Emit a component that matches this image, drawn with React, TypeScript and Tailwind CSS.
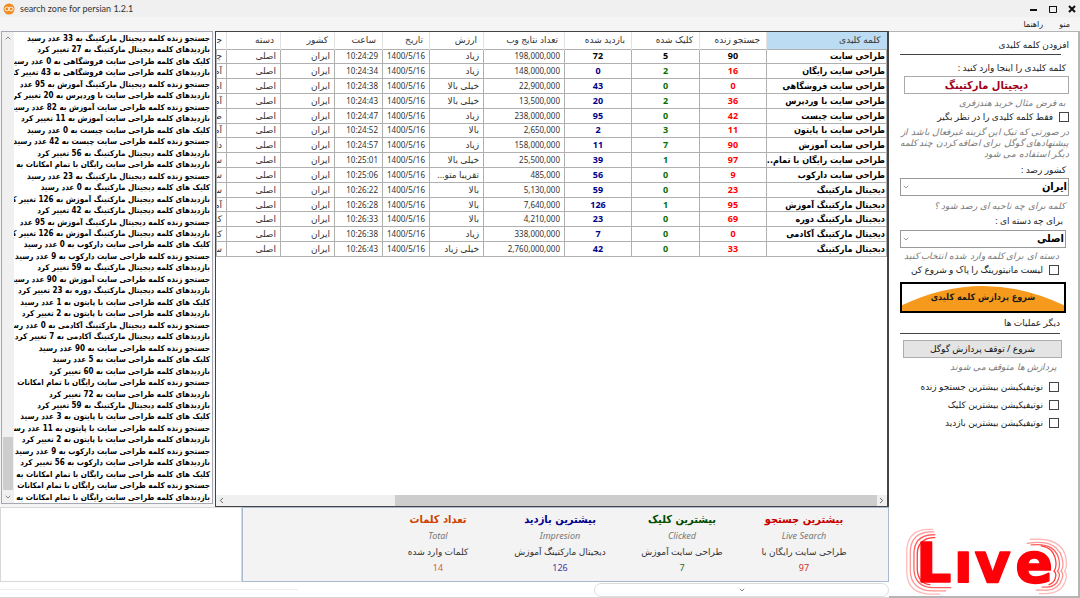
import { ReactNode, useState } from "react";
import { ChevronDown, ChevronLeft, ChevronRight, ChevronUp } from "lucide-react";

interface IRow {
  keyword: string;
  live: string;
  clicked: string;
  visited: string;
  results: string;
  value: string;
  date: string;
  time: string;
  country: string;
  category: string;
  search: string;
}

const makeRow = (
  keyword: string,
  live: string,
  clicked: string,
  visited: string,
  results: string,
  value: string,
  time: string,
  search: string
): IRow => ({
  keyword,
  live,
  clicked,
  visited,
  results,
  value,
  time,
  search,
  date: "1400/5/16",
  country: "ایران",
  category: "اصلی",
});

const rows: IRow[] = [
  makeRow("طراحی سایت", "90", "5", "72", "198,000,000", "زیاد", "10:24:29", "چیست"),
  makeRow("طراحی سایت رایگان", "16", "2", "0", "148,000,000", "زیاد", "10:24:34", "آموزش"),
  makeRow("طراحی سایت فروشگاهی", "0", "0", "43", "22,900,000", "خیلی بالا", "10:24:38", "امکانات"),
  makeRow("طراحی سایت با وردپرس", "36", "2", "20", "13,500,000", "خیلی بالا", "10:24:43", "آموزش"),
  makeRow("طراحی سایت چیست", "42", "0", "95", "238,000,000", "زیاد", "10:24:47", "طراحی"),
  makeRow("طراحی سایت با پایتون", "11", "3", "2", "2,650,000", "بالا", "10:24:52", "آموزش"),
  makeRow("طراحی سایت آموزش", "90", "7", "11", "158,000,000", "زیاد", "10:24:57", "دارکوب"),
  makeRow("طراحی سایت رایگان با تمام...", "97", "1", "39", "25,500,000", "خیلی بالا", "10:25:01", "سایت"),
  makeRow("طراحی سایت دارکوب", "9", "0", "56", "485,000", "تقریبا متو...", "10:25:06", "سایت"),
  makeRow("دیجیتال مارکتینگ", "23", "0", "59", "5,130,000", "بالا", "10:26:22", "سایت"),
  makeRow("دیجیتال مارکتینگ آموزش", "95", "1", "126", "7,640,000", "بالا", "10:26:28", "آموزش"),
  makeRow("دیجیتال مارکتینگ دوره", "69", "0", "23", "4,210,000", "بالا", "10:26:33", "کتاب"),
  makeRow("دیجیتال مارکتینگ آکادمی", "0", "0", "7", "338,000,000", "زیاد", "10:26:38", "کتاب"),
  makeRow("دیجیتال مارکتینگ", "33", "0", "42", "2,760,000,000", "خیلی زیاد", "10:26:43", "سایت"),
];

const logs: string[] = [
  "جستجو زنده کلمه دیجیتال مارکتینگ به 33 عدد رسید",
  "بازدیدهای کلمه دیجیتال مارکتینگ به 27 تغییر کرد",
  "کلیک های کلمه طراحی سایت فروشگاهی به 0 عدد رسید",
  "بازدیدهای کلمه طراحی سایت فروشگاهی به 43 تغییر کرد",
  "جستجو زنده کلمه دیجیتال مارکتینگ آموزش به 95 عدد",
  "بازدیدهای کلمه طراحی سایت با وردپرس به 20 تغییر کرد",
  "جستجو زنده کلمه طراحی سایت آموزش به 82 عدد رسید",
  "بازدیدهای کلمه طراحی سایت آموزش به 11 تغییر کرد",
  "کلیک های کلمه طراحی سایت چیست به 0 عدد رسید",
  "جستجو زنده کلمه طراحی سایت چیست به 42 عدد رسید",
  "بازدیدهای کلمه دیجیتال مارکتینگ به 56 تغییر کرد",
  "بازدیدهای کلمه طراحی سایت رایگان با تمام امکانات به",
  "جستجو زنده کلمه دیجیتال مارکتینگ به 23 عدد رسید",
  "کلیک های کلمه دیجیتال مارکتینگ به 0 عدد رسید",
  "بازدیدهای کلمه دیجیتال مارکتینگ آموزش به 126 تغییر کرد",
  "بازدیدهای کلمه دیجیتال مارکتینگ به 42 تغییر کرد",
  "جستجو زنده کلمه دیجیتال مارکتینگ آموزش به 95 عدد",
  "بازدیدهای کلمه دیجیتال مارکتینگ آموزش به 126 تغییر کرد",
  "کلیک های کلمه طراحی سایت دارکوب به 0 عدد رسید",
  "جستجو زنده کلمه طراحی سایت دارکوب به 9 عدد رسید",
  "بازدیدهای کلمه دیجیتال مارکتینگ به 59 تغییر کرد",
  "جستجو زنده کلمه طراحی سایت آموزش به 90 عدد رسید",
  "بازدیدهای کلمه دیجیتال مارکتینگ دوره به 23 تغییر کرد",
  "کلیک های کلمه طراحی سایت با پایتون به 1 عدد رسید",
  "بازدیدهای کلمه طراحی سایت با پایتون به 2 تغییر کرد",
  "جستجو زنده کلمه دیجیتال مارکتینگ آکادمی به 0 عدد رسید",
  "بازدیدهای کلمه دیجیتال مارکتینگ آکادمی به 7 تغییر کرد",
  "جستجو زنده کلمه طراحی سایت به 90 عدد رسید",
  "کلیک های کلمه طراحی سایت به 5 عدد رسید",
  "بازدیدهای کلمه طراحی سایت به 60 تغییر کرد",
  "جستجو زنده کلمه طراحی سایت رایگان با تمام امکانات",
  "بازدیدهای کلمه طراحی سایت به 72 تغییر کرد",
  "بازدیدهای کلمه دیجیتال مارکتینگ به 59 تغییر کرد",
  "کلیک های کلمه طراحی سایت با پایتون به 3 عدد رسید",
  "جستجو زنده کلمه طراحی سایت با پایتون به 11 عدد رسید",
  "بازدیدهای کلمه طراحی سایت با پایتون به 2 تغییر کرد",
  "جستجو زنده کلمه طراحی سایت دارکوب به 9 عدد رسید",
  "بازدیدهای کلمه طراحی سایت دارکوب به 56 تغییر کرد",
  "کلیک های کلمه طراحی سایت رایگان با تمام امکانات به",
  "جستجو زنده کلمه طراحی سایت رایگان با تمام امکانات",
  "بازدیدهای کلمه طراحی سایت رایگان با تمام امکانات به",
];

const stats = [
  { title: "بیشترین جستجو", sub: "Live Search", name: "طراحی سایت رایگان با", count: "97", titleColor: "text-[#c80000]", countColor: "text-[#d03030]" },
  { title: "بیشترین کلیک", sub: "Clicked", name: "طراحی سایت آموزش", count: "7", titleColor: "text-[#004b00]", countColor: "text-[#2f6b2f]" },
  { title: "بیشترین بازدید", sub: "Impresion", name: "دیجیتال مارکتینگ آموزش", count: "126", titleColor: "text-[#00008b]", countColor: "text-[#3a3aa5]" },
  { title: "تعداد کلمات", sub: "Total", name: "کلمات وارد شده", count: "14", titleColor: "text-[#cc4400]", countColor: "text-[#d9622b]" },
];

const AppIcon = () => (
  <svg width="12" height="12" viewBox="0 0 12 12" aria-hidden="true">
    <circle cx="6" cy="6" r="5.5" fill="#f08a1d" />
    <rect x="2" y="4.2" width="4" height="3.6" rx="1.6" fill="none" stroke="#fff" strokeWidth="1" />
    <rect x="6" y="4.2" width="4" height="3.6" rx="1.6" fill="none" stroke="#fff" strokeWidth="1" />
  </svg>
);

const LiveLogo = () => (
  <svg viewBox="0 0 164 68" className="w-full" role="img" aria-label="Live" direction="ltr">
    <g fill="none" strokeWidth="1.3" strokeLinecap="round">
      <g stroke="#ffb9b9">
        <path d="M27 1.3H22Q.8 2 .8 24V44Q1 66.5 26 66.5H34" />
        <path d="M125 11.3H134Q161 12 161.5 36Q161.5 41 159.5 43.5Q162 46 161 51Q158 65 142 66H134" />
      </g>
      <g stroke="#ff9494">
        <path d="M28 4H24Q4.3 5 4.3 25V43Q5 63 27 63.3H40" />
        <path d="M122 15.5Q156 10 158 36Q158 41 156 43.5Q159 46 157 51Q154 62 142 62.5H131" />
      </g>
      <g stroke="#ff6060">
        <path d="M29 6.8H26Q8 8 8 26V42Q9 59.8 28 60H45" />
        <path d="M126 17Q153 14 154.5 36Q154.5 41 152.5 43.5Q155.5 46 153.5 51Q151 59 142 59.5H137" />
      </g>
      <g stroke="#ff3a3a">
        <path d="M29 9.7H27Q11.3 11 11.3 27V41Q12 56 24 57" />
        <path d="M136 18Q150 20 151 36Q151 41 149 43.5Q152 46 150 51Q149 55 144 57" />
      </g>
    </g>
    <text
      x="10 48 69 110"
      y="54"
      fill="#fd0008"
      stroke="#fd0008"
      strokeWidth="1.5"
      strokeLinejoin="round"
      fontFamily="DejaVu Sans, sans-serif"
      fontWeight="700"
      fontSize="56"
    >
      Lıve
    </text>
  </svg>
);

const condensed = "font-['DejaVu_Sans_Condensed','DejaVu_Sans',sans-serif]";

const Hint = ({ children }: { children: ReactNode }) => (
  <p className="text-[9px] leading-[11px] whitespace-nowrap italic text-[#777]">{children}</p>
);

const CheckField = ({ label }: { label: string }) => (
  <label className="flex h-[18px] items-center gap-[6px] text-[9px] text-[#222]">
    <input
      type="checkbox"
      className="size-[10px] shrink-0 appearance-none border border-[#444] bg-white checked:bg-[#444]"
    />
    {label}
  </label>
);

const SelectField = ({ id, options }: { id: string; options: string[] }) => (
  <div className="relative">
    <select
      id={id}
      className={`${condensed} block h-[18px] w-full appearance-none border border-[#999] bg-white px-px text-[11px] leading-[16px] font-bold text-black`}
    >
      {options.map((option) => (
        <option key={option}>{option}</option>
      ))}
    </select>
    <ChevronDown className="pointer-events-none absolute top-[5px] left-[2px]" size={8} color="#666" />
  </div>
);

const LogPanel = () => (
  <section className="flex w-[212px] shrink-0 border border-[#a5a8b0] bg-white" dir="ltr">
    <div className="flex w-[12px] shrink-0 flex-col items-center justify-between bg-[#f0f0f0] py-[2px]">
      <ChevronUp size={8} color="#555" />
      <div className="flex w-full flex-col items-center gap-[3px]">
        <div className="h-[53px] w-[10px] bg-[#cdcdcd]" />
        <ChevronDown size={8} color="#555" />
      </div>
    </div>
    <ul
      dir="rtl"
      className={`${condensed} flex min-w-0 flex-1 flex-col overflow-hidden pt-px pr-[2px] text-[8px] font-bold whitespace-nowrap text-black`}
    >
      {logs.map((log, index) => (
        <li key={index} className="flex-1 leading-[11px]">
          {log}
        </li>
      ))}
    </ul>
  </section>
);

const headClass = "border-l border-[#e2e2e2] pr-[6px] text-right font-normal whitespace-nowrap";
const cellClass = "border border-[#b0b0b0] text-right whitespace-nowrap overflow-hidden";
const countClass = "border border-[#b0b0b0] text-center font-bold text-[9px]";

const ResultTable = () => (
  <section className="flex min-w-0 flex-1 flex-col border border-r-2 border-[#444] bg-white">
    <div className="flex-1 overflow-hidden">
      <table dir="rtl" className="h-[225px] w-full table-fixed border-collapse text-[9px] leading-[12px] text-[#333]">
        <colgroup>
          <col />
          <col className="w-[67px]" />
          <col className="w-[68px]" />
          <col className="w-[67px]" />
          <col className="w-[81px]" />
          <col className="w-[54px]" />
          <col className="w-[47px]" />
          <col className="w-[48px]" />
          <col className="w-[54px]" />
          <col className="w-[54px]" />
          <col className="w-[10px]" />
        </colgroup>
        <thead>
          <tr className="h-[17px]">
            <th className={`${headClass} bg-[#bbdcf2]`}>کلمه کلیدی</th>
            <th className={headClass}>جستجو زنده</th>
            <th className={headClass}>کلیک شده</th>
            <th className={headClass}>بازدید شده</th>
            <th className={headClass}>تعداد نتایج وب</th>
            <th className={headClass}>ارزش</th>
            <th className={headClass}>تاریخ</th>
            <th className={headClass}>ساعت</th>
            <th className={headClass}>کشور</th>
            <th className={headClass}>دسته</th>
            <th className="overflow-hidden pr-[4px] text-right font-normal">جستجو</th>
          </tr>
        </thead>
        <tbody>
          {rows.map((row, index) => (
            <tr key={row.time}>
              <td className={`${cellClass} ${condensed} pr-px font-bold text-black`}>{row.keyword}</td>
              <td className={`${countClass} ${index === 0 ? "text-black" : "text-[#f00]"}`}>{row.live}</td>
              <td className={`${countClass} ${index === 0 ? "text-black" : "text-[#007000]"}`}>{row.clicked}</td>
              <td className={`${countClass} ${index === 0 ? "text-black" : "text-[#00008b]"}`}>{row.visited}</td>
              <td className={`${cellClass} pr-[4px] text-[8px]`}>{row.results}</td>
              <td className={`${cellClass} pr-[4px]`}>{row.value}</td>
              <td className={`${cellClass} pr-[4px] text-[8px]`}>{row.date}</td>
              <td className={`${cellClass} pr-[4px] text-[8px]`}>{row.time}</td>
              <td className={`${cellClass} pr-[4px]`}>{row.country}</td>
              <td className={`${cellClass} pr-[4px]`}>{row.category}</td>
              <td className={`${cellClass} pr-[4px]`}>{row.search}</td>
            </tr>
          ))}
        </tbody>
      </table>
    </div>
    <div className="flex h-[11px] items-center bg-[#f0f0f0] px-px">
      <ChevronLeft size={9} color="#333" />
      <div className="ml-[169px] h-full flex-1 bg-[#cdcdcd]" />
      <ChevronRight size={9} color="#333" />
    </div>
  </section>
);

const StatsPanel = () => (
  <section className="flex h-[75px] shrink-0">
    <div className="w-[242px] border border-[#d8d8d8] bg-white" />
    <div dir="rtl" className="flex flex-1 border border-[#a9bad0] bg-[#f3f3f3] pr-[23px]">
      {stats.map(({ title, sub, name, count, titleColor, countColor }) => (
        <div key={title} className="flex w-[122px] flex-col items-center pt-[4px] whitespace-nowrap">
          <h2 className={`${condensed} text-[11px] leading-[16px] font-bold ${titleColor}`}>{title}</h2>
          <p className="text-[9px] leading-[16px] text-[#777] italic">{sub}</p>
          <p className="text-[9px] leading-[16px] text-[#333]">{name}</p>
          <p className={`text-[9px] leading-[16px] ${countColor}`}>{count}</p>
        </div>
      ))}
    </div>
  </section>
);

const SidePanel = () => {
  const [keyword, setKeyword] = useState<string>("دیجیتال مارکتینگ");

  return (
    <aside
      dir="rtl"
      className="flex w-[191px] shrink-0 flex-col border-t border-r-2 border-b-2 border-[#b5b5b5] bg-white pr-[9px] pl-[11px] text-[9px] text-[#222]"
    >
      <h2 className="mt-[5px] mb-px leading-[16px]">افزودن کلمه کلیدی</h2>
      <hr className="mr-[8px] border-[#444]" />
      <label htmlFor="keyword" className="mt-[5px] pr-[3px] leading-[15px]">
        کلمه کلیدی را اینجا وارد کنید :
      </label>
      <input
        id="keyword"
        value={keyword}
        onChange={(e) => setKeyword(e.target.value)}
        className={`${condensed} mt-px ml-[4px] h-[18px] border border-[#aaa] text-center text-[11px] font-bold text-[#a00018]`}
      />
      <div className="mt-[3px] pr-[3px]">
        <Hint>به فرض مثال خرید هندزفری</Hint>
      </div>
      <CheckField label="فقط کلمه کلیدی را در نظر بگیر" />
      <Hint>
        در صورتی که تیک این گزینه غیرفعال باشد از
        <br />
        پیشنهادهای گوگل برای اضافه کردن چند کلمه
        <br />
        دیگر استفاده می شود
      </Hint>
      <label htmlFor="country" className="mt-[3px] mb-px pr-[3px] leading-[15px]">
        کشور رصد :
      </label>
      <SelectField id="country" options={["ایران"]} />
      <div className="mt-[4px] pr-[4px]">
        <Hint>کلمه برای چه ناحیه ای رصد شود ؟</Hint>
      </div>
      <div className="flex flex-col pr-[3px]">
        <label htmlFor="category" className="mt-[2px] mb-[2px] pr-[3px] leading-[15px]">
          برای چه دسته ای :
        </label>
        <SelectField id="category" options={["اصلی"]} />
        <div className="mt-[2px] pr-[7px]">
          <Hint>دسته ای برای کلمه وارد شده انتخاب کنید</Hint>
          <CheckField label="لیست مانیتورینگ را پاک و شروع کن" />
        </div>
        <button type="button" className="relative mt-[3px] h-[31px] overflow-hidden border-2 border-black bg-white">
          <svg viewBox="0 0 160 28" preserveAspectRatio="none" className="absolute inset-0 size-full" aria-hidden="true">
            <path d="M0 22Q80 -18 160 22V28H0Z" fill="#f59a1d" />
          </svg>
          <span className={`${condensed} relative text-[9px] font-bold text-[#1a1a1a]`}>شروع پردازش کلمه کلیدی</span>
        </button>
      </div>
      <div className="flex flex-col pr-[9px]">
        <h2 className="mt-[2px] leading-[16px]">دیگر عملیات ها</h2>
        <hr className="mt-[2px] border-[#444]" />
      </div>
      <div className="flex flex-col pr-[7px] pl-[3px]">
        <button
          type="button"
          className="mt-[6px] h-[18px] border border-[#adadad] bg-[#e4e4e4] leading-[14px] text-[#111]"
        >
          شروع / توقف پردازش گوگل
        </button>
        <div className="mt-[3px] mb-[6px] pr-[5px]">
          <Hint>پردازش ها متوقف می شوند</Hint>
        </div>
        <div className="pr-[3px]">
          <CheckField label="نوتیفیکیشن بیشترین جستجو زنده" />
          <CheckField label="نوتیفیکیشن بیشترین کلیک" />
          <CheckField label="نوتیفیکیشن بیشترین بازدید" />
        </div>
      </div>
      <div className="mt-auto pl-[6px]">
        <LiveLogo />
      </div>
    </aside>
  );
};

const App = () => {
  return (
    <div className="flex h-screen flex-col overflow-hidden bg-[#f5f5f5] font-['Noto_Sans','DejaVu_Sans',sans-serif]">
      <header className="flex h-[17px] shrink-0 items-center gap-[5px] bg-[#f0f0f0] px-[3px]">
        <AppIcon />
        <h1 className="flex-1 font-['Lato',sans-serif] text-[9px] text-[#333]">search zone for persian 1.2.1</h1>
        <div className="flex items-center gap-[8px]">
          <button type="button" aria-label="Minimize" className="flex size-[11px] items-center justify-center">
            <svg width="8" height="8"><path d="M0 5H7" stroke="#111" strokeWidth="2" /></svg>
          </button>
          <button type="button" aria-label="Maximize" className="flex size-[11px] items-center justify-center">
            <svg width="8" height="8"><path d="M.5 1.5H7.5V7.5H.5ZM0 1.5H8" fill="none" stroke="#111" /></svg>
          </button>
          <button type="button" aria-label="Close" className="flex size-[11px] items-center justify-center">
            <svg width="8" height="8"><path d="M1 1L7 7M7 1L1 7" stroke="#111" strokeWidth="2" /></svg>
          </button>
        </div>
      </header>
      <nav dir="rtl" className="flex h-[14px] shrink-0 items-center gap-[16px] pr-[10px] text-[8px] text-[#222]">
        <button type="button">منو</button>
        <button type="button">راهنما</button>
      </nav>
      <main className="flex min-h-0 flex-1">
        <div className="flex min-w-0 flex-1 flex-col">
          <div className="flex min-h-0 flex-1 gap-[2px] pl-px">
            <div className="flex pb-[3px]">
              <LogPanel />
            </div>
            <ResultTable />
          </div>
          <StatsPanel />
          <footer className="flex h-[16px] shrink-0 items-center justify-between border-b border-[#d8d8d8] bg-white">
            <hr className="w-[298px] border-[#eee]" />
            <button
              type="button"
              aria-label="Expand"
              className="flex h-[14px] w-[295px] items-center justify-center rounded-full border border-[#ddd] bg-white"
            >
              <ChevronDown size={8} color="#444" />
            </button>
          </footer>
        </div>
        <SidePanel />
      </main>
    </div>
  );
};

export default App;
